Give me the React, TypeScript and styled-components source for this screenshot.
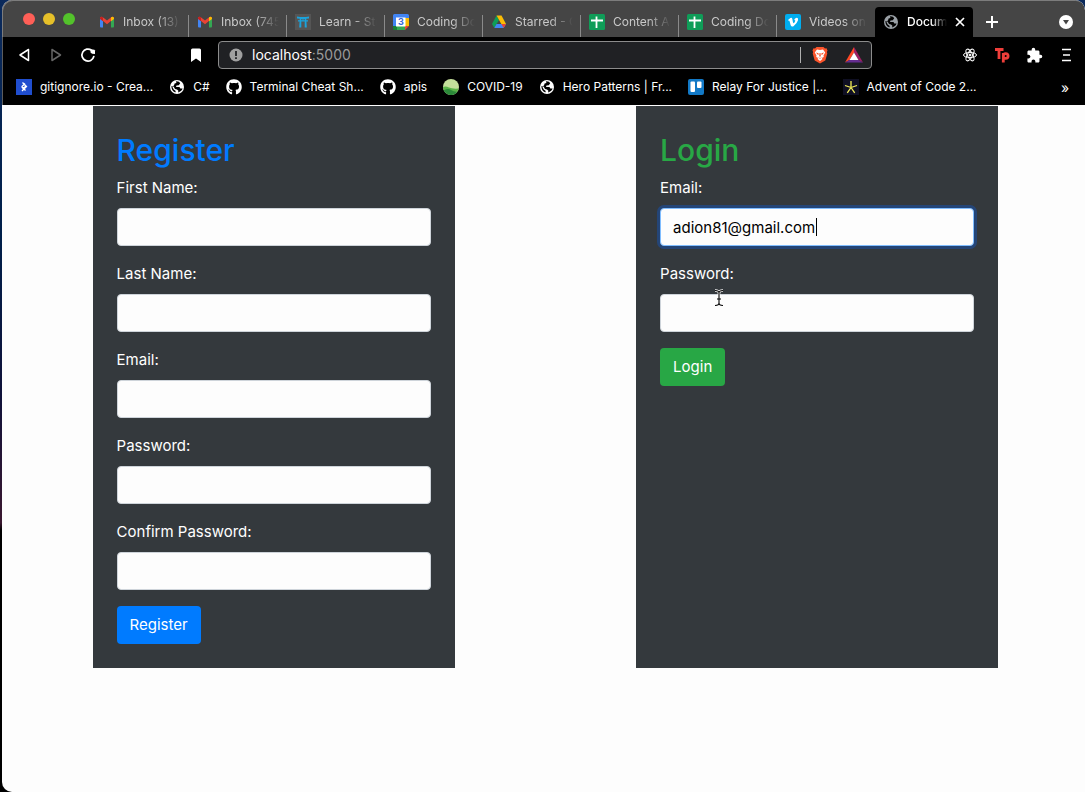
import React, { useId } from "react";
import styled, { createGlobalStyle, css } from "styled-components";
import { FaGithub } from "react-icons/fa";
import { MdExtension } from "react-icons/md";

const GlobalStyle = createGlobalStyle`
  *, *::before, *::after { box-sizing: border-box; }
  html, body, #root { height: 100%; }
  body {
    margin: 0;
    overflow: hidden;
    background: #000;
    font-family: Inter, "Liberation Sans", sans-serif;
    -webkit-font-smoothing: antialiased;
  }
  button, input { font: inherit; }
`;

const Desktop = styled.div`
  min-height: 100vh;
  display: flex;
  padding-left: 2px;
  background: linear-gradient(#0b2a5c 0, #001f4a 30%, #10123a 50%, #3a1830 66%, #000 67%);
`;

const BrowserWindow = styled.div`
  flex: 1;
  min-width: 0;
  display: flex;
  flex-direction: column;
  overflow: hidden;
  border-radius: 10px 10px 0 10px;
  background: #fdfdfd;
`;

const TabStrip = styled.div`
  display: flex;
  align-items: flex-end;
  height: 37px;
  border-radius: 10px 10px 0 0;
  background: #454545;
  box-shadow: inset 1px 1px #7c7c7c;
`;

const TrafficLights = styled.div`
  display: flex;
  gap: 8px;
  align-self: center;
  padding: 0 16px 0 21px;
`;

const Light = styled.button<{ $color: string }>`
  width: 12px;
  height: 12px;
  padding: 0;
  border: 0;
  border-radius: 50%;
  background: ${(p) => p.$color};
`;

const Tabs = styled.div`
  display: flex;
  align-items: flex-end;
`;

const Tab = styled.button<{ $active?: boolean; $divider?: boolean }>`
  display: flex;
  align-items: center;
  gap: 8px;
  width: 98px;
  height: 30px;
  padding: 0 8px;
  border: 0;
  background: none;
  color: #c9c9c9;
  font-size: 12px;
  line-height: 16px;
  text-align: left;
  ${(p) =>
    p.$divider &&
    css`
      background: linear-gradient(#8a8a8a, #8a8a8a) right bottom / 1px 22px no-repeat;
    `}
  ${(p) =>
    p.$active &&
    css`
      border-radius: 4px 4px 0 0;
      background: #000;
      color: #fff;
      font-weight: 500;
    `}
  svg { flex: none; }
`;

const TabTitle = styled.span`
  flex: 1;
  min-width: 0;
  white-space: nowrap;
  mask-image: linear-gradient(to right, #000 60%, transparent);
`;

const IconButton = styled.button`
  display: inline-flex;
  align-items: center;
  justify-content: center;
  width: 20px;
  height: 20px;
  padding: 0;
  border: 0;
  background: none;
  color: #fff;
`;

const TabStripEnd = styled.div`
  flex: 1;
  display: flex;
  align-items: center;
  justify-content: space-between;
  height: 30px;
  padding: 0 9px;
`;

const Toolbar = styled.div`
  display: flex;
  align-items: center;
  height: 36px;
  padding: 0 9px 0 12px;
  background: #000;
  box-shadow: inset 1px 0 #5c5c5c;
`;

const NavButtons = styled.div`
  display: flex;
  flex: 1;
  gap: 12px;
`;

const AddressBar = styled.div`
  display: flex;
  align-items: center;
  flex: 0 1 654px;
  height: 28px;
  margin-left: 12px;
  padding: 0 7px 0 10px;
  border: 1px solid #8c8c8c;
  border-radius: 4px;
  background: #202124;
  color: #9a9a9a;
  font-size: 14px;
  line-height: 20px;
`;

const Address = styled.div`
  flex: 1;
  padding-left: 9px;
  b { color: #fff; font-weight: 400; }
`;

const Shields = styled.div`
  display: flex;
  align-items: center;
  gap: 14px;
  height: 16px;
  padding-left: 9px;
  border-left: 1px solid #b0b0b0;
`;

const Extensions = styled.div`
  display: flex;
  flex: 1;
  justify-content: flex-end;
  gap: 12px;
  padding-left: 32px;
`;

const BookmarksBar = styled.nav`
  display: flex;
  align-items: center;
  gap: 16px;
  height: 32px;
  padding: 0 10px 4px 14px;
  background: #000;
  box-shadow: inset 1px 0 #5c5c5c;
`;

const Bookmark = styled.a`
  display: flex;
  align-items: center;
  gap: 8px;
  color: #fff;
  font-size: 12px;
  line-height: 16px;
  text-decoration: none;
  white-space: nowrap;
  svg { flex: none; }
`;

const Overflow = styled(IconButton)`
  margin-left: auto;
  font-size: 14px;
`;

const Main = styled.main`
  display: flex;
  justify-content: space-around;
  align-items: stretch;
  margin-right: -4px;
  padding-top: 1px;
`;

const Panel = styled.form`
  width: 33.3333%;
  padding: 24px;
  background: #34393d;
  color: #fff;
  font-size: 15px;
  line-height: 24px;
`;

const Title = styled.h2<{ $color: string }>`
  margin: 0 0 6px;
  color: ${(p) => p.$color};
  font-size: 30px;
  line-height: 40px;
  font-weight: 500;
`;

const Field = styled.div`
  margin-bottom: 16px;
`;

const Label = styled.label`
  display: block;
  margin-bottom: 8px;
`;

const InputWrap = styled.div`
  position: relative;
`;

const Input = styled.input`
  display: block;
  width: 100%;
  height: 38px;
  padding: 6px 12px;
  border: 1px solid #ced4da;
  border-radius: 4px;
  background: #fdfdfd;
  color: #000;
  outline: 0;
  caret-color: transparent;
  &:focus {
    border-color: #80bdff;
    box-shadow: 0 0 0 3px rgba(0, 98, 255, 0.3);
  }
`;

const Caret = styled.span`
  position: absolute;
  left: 156px;
  top: 10px;
  width: 1px;
  height: 18px;
  background: #000;
`;

const Submit = styled.button<{ $color: string }>`
  display: block;
  height: 38px;
  padding: 0 13px;
  border: 0;
  border-radius: 4px;
  background: ${(p) => p.$color};
  color: #fff;
`;

const TextPointer = styled.svg`
  position: absolute;
  left: 54px;
  top: -5px;
  pointer-events: none;
`;

const Gmail = () => (
  <svg width="16" height="16" viewBox="0 0 16 16">
    <path fill="#4285f4" d="M1 4v8.500q0 1 1 1h2V6.500z" />
    <path fill="#34a853" d="M15 4v8.500q0 1-1 1h-2V6.500z" />
    <path fill="#ea4335" d="M1 4.500q0-2.500 2.500-1.500L8 6.500 12.500 3Q15 2 15 4.500L8 10.200z" />
    <path fill="#fbbc04" d="M12 3.400l.5-.4Q15 2 15 4.500V5l-3 2.300z" />
    <path fill="#c5221f" d="M4 3.400L3.500 3Q1 2 1 4.500V5l3 2.300z" />
  </svg>
);

const Torii = () => (
  <svg width="16" height="16" viewBox="0 0 16 16">
    <rect width="16" height="16" fill="#555" />
    <path fill="#1aa3dc" d="M2 2.500q6 1.200 12 0v2q-6 .8-12 0zM3 6.200h10v1.400H3zM4.800 4h1.500v9.500H4.200zM9.700 4h1.500l.6 9.500H9.700zM7.500 4h1v3h-1z" />
  </svg>
);

const Calendar = () => (
  <svg width="16" height="16" viewBox="0 0 16 16">
    <path fill="#4285f4" d="M1.500 0h13A1.500 1.500 0 0 1 16 1.500V4H4v12L0 12V1.500A1.500 1.500 0 0 1 1.500 0z" />
    <path fill="#188038" d="M0 12h4v4H1.500A1.500 1.500 0 0 1 0 14.500z" />
    <path fill="#34a853" d="M4 12h8v4H4z" />
    <path fill="#fbbc04" d="M12 4h4v8h-4z" />
    <path fill="#ea4335" d="M12 12h4l-4 4z" />
    <rect x="3" y="3.500" width="9.500" height="9" fill="#fff" />
    <text x="7.800" y="11.300" fontSize="9" fontWeight="700" fontFamily="Inter, sans-serif" textAnchor="middle" fill="#3367d6">3</text>
  </svg>
);

const Drive = () => (
  <svg width="16" height="16" viewBox="0 0 16 16">
    <path fill="#0f9d58" d="M5.500 1.500L8 6 3.300 14 1 10z" />
    <path fill="#fbbc04" d="M5.500 1.500h5L15 10h-4.700z" />
    <path fill="#4285f4" d="M5.500 10H15l-2.300 4H3.300z" />
    <path fill="#ea4335" d="M10.300 10H15l-2.300 4z" />
  </svg>
);

const Sheets = () => (
  <svg width="16" height="16" viewBox="0 0 16 16">
    <rect width="16" height="16" rx="1.500" fill="#0f9d58" />
    <path stroke="#fff" strokeWidth="1.800" d="M2 6.500h12M7.500 2.500v11.500" />
  </svg>
);

const Vimeo = () => (
  <svg width="16" height="16" viewBox="0 0 16 16">
    <rect width="16" height="16" rx="2" fill="#00adef" />
    <path fill="#fff" d="M3 6l2.400-2q1.600-.8 2 1.200.6 4 1.200 4 .7 0 1.600-2.300.2-1.200-1.200-.7Q9.800 3.500 12 3.700q1.500.3 1 2.500Q12 9.500 8.500 12.200q-2 1.200-2.800-1L4.500 7q-.3-.8-1-.2z" />
  </svg>
);

const Globe = ({ color = "#fff", hole = "#000" }) => (
  <svg width="16" height="16" viewBox="0 0 16 16">
    <circle cx="8" cy="8" r="7" fill={color} />
    <path fill={hole} d="M7 2.200Q10.500 2 11.200 4.300L9.800 6.200 7.500 6.400 7 8h3.500l.8 1.600h2.300Q12.500 12.800 9 13.400l.4-1.700L8 10.500 6 10 4.600 7.600 2.400 7q-.2 4.800 4 6.500l.3-1.600-2-1.300L3.200 7.400 5 6.500 5.600 4.500 7.400 4z" />
  </svg>
);

const Toptal = () => (
  <svg width="16" height="16" viewBox="0 0 16 16">
    <rect width="16" height="16" fill="#204ecf" />
    <path fill="none" stroke="#fff" strokeWidth="1.300" d="M6.500 3.500l4 4-4.500 4.500M5.500 7.500l4 4M6 7.500l3-3M10 7l-3.500 3" />
  </svg>
);

const CovidMap = () => (
  <svg width="16" height="16" viewBox="0 0 16 16">
    <circle cx="8" cy="8" r="8" fill="#c5e09b" />
    <path fill="#5cb549" d="M0 8q3-1 6 .5T15.700 9.500A8 8 0 0 1 0 8z" />
    <path fill="#2c8a3a" d="M.8 11.500Q5 9 8 11t6.500 1.700A8 8 0 0 1 .8 11.500z" />
  </svg>
);

const Trello = () => (
  <svg width="16" height="16" viewBox="0 0 16 16">
    <rect width="16" height="16" rx="2" fill="#1279c6" />
    <rect x="2.500" y="2.500" width="4.500" height="10.500" rx="1" fill="#fff" />
    <rect x="9" y="2.500" width="4.500" height="6.500" rx="1" fill="#fff" />
  </svg>
);

const Star = () => (
  <svg width="16" height="16" viewBox="0 0 16 16">
    <rect width="16" height="16" fill="#0f0f23" />
    <path fill="none" stroke="#f5ef5a" strokeWidth="1.300" d="M8 8.500V2M8 8.500L2 6.500M8 8.500l6-2M8 8.500L4.300 13.800M8 8.500l3.700 5.300" />
  </svg>
);

const Brave = () => (
  <svg width="18" height="18" viewBox="0 0 18 18">
    <path fill="#fb542b" d="M5.500 1h7l1.500 1.500 1.500-.2 1 2.200-.6 1.500.4 1.500-2 7L9 17.500 3.700 14.500l-2-7L2.100 6l-.6-1.500 1-2.200 1.500.2z" />
    <path fill="#fff" d="M6 3.500l3 .5 3-.5 2.200 3-1.700 3 .3 1.500-2 1 .7 1L9 15l-2.500-2 .7-1-2-1 .3-1.500-1.700-3z" />
    <path fill="#fb542b" d="M5 6.500l2.500.7.3 1.500L6.500 8.500zM13 6.500l-2.500.7-.3 1.500 1.300-.2zM8.500 7h1l.3 3L9 11l-.8-1zM6.700 11.200L9 12l2.300-.8L9 12.800z" />
  </svg>
);

const Bat = () => (
  <svg width="18" height="16" viewBox="0 0 18 16">
    <path fill="#ff4724" d="M9 0v5.500L4.500 13 0 15.500z" />
    <path fill="#9e1f63" d="M9 0v5.500l4.500 7.500 4.500 2.500z" />
    <path fill="#662d91" d="M0 15.500L4.500 13h9l4.500 2.500z" />
    <path fill="#fff" d="M9 5.500l4.500 7.500h-9z" />
  </svg>
);

const Atom = () => (
  <svg width="16" height="16" viewBox="0 0 16 16" fill="none" stroke="#fff" strokeWidth="1">
    <ellipse cx="8" cy="8" rx="6.500" ry="2.600" />
    <ellipse cx="8" cy="8" rx="6.500" ry="2.600" transform="rotate(60 8 8)" />
    <ellipse cx="8" cy="8" rx="6.500" ry="2.600" transform="rotate(120 8 8)" />
    <circle cx="8" cy="8" r="1" fill="#fff" />
  </svg>
);

const Back = ({ flip = false, color = "#fff" }) => (
  <svg width="20" height="20" viewBox="0 0 20 20">
    <path fill="none" stroke={color} strokeWidth="1.500" strokeLinejoin="round" d={flip ? "M6 4.500v11l8.500-5.500z" : "M14.500 4.500v11L6 10z"} />
  </svg>
);

const Reload = () => (
  <svg width="20" height="20" viewBox="0 0 20 20">
    <path fill="none" stroke="#fff" strokeWidth="1.700" strokeLinecap="round" d="M15.800 11.500a6 6 0 1 1-2.300-6.300" />
    <path fill="#fff" d="M12.500 4.500q4.500-.5 4.500 1v3.500q-3.500 0-4.500-1.500z" />
  </svg>
);

const BookmarkFlag = () => (
  <svg width="12" height="14" viewBox="0 0 12 14">
    <path fill="#fff" d="M2.500.5h7q1.500 0 1.500 1.500v12l-5-3.500L1 14V2Q1 .5 2.500.5z" />
  </svg>
);

const Info = () => (
  <svg width="14" height="14" viewBox="0 0 14 14">
    <circle cx="7" cy="7" r="6.500" fill="#a0a0a0" />
    <path stroke="#202124" strokeWidth="1.800" d="M7 3v5M7 9.200v1.900" />
  </svg>
);

const tabs = [
  { title: "Inbox (13) ·", icon: <Gmail /> },
  { title: "Inbox (745", icon: <Gmail /> },
  { title: "Learn - Stu", icon: <Torii /> },
  { title: "Coding Do", icon: <Calendar /> },
  { title: "Starred - G", icon: <Drive /> },
  { title: "Content Au", icon: <Sheets /> },
  { title: "Coding Do", icon: <Sheets /> },
  { title: "Videos on", icon: <Vimeo /> },
];

const bookmarks = [
  { title: "gitignore.io - Crea...", icon: <Toptal /> },
  { title: "C#", icon: <Globe /> },
  { title: "Terminal Cheat Sh...", icon: <FaGithub size={16} /> },
  { title: "apis", icon: <FaGithub size={16} /> },
  { title: "COVID-19", icon: <CovidMap /> },
  { title: "Hero Patterns | Fr...", icon: <Globe /> },
  { title: "Relay For Justice |...", icon: <Trello /> },
  { title: "Advent of Code 2...", icon: <Star /> },
];

type FormFieldProps = {
  label: string;
  type?: string;
  value?: string;
  focused?: boolean;
  children?: React.ReactNode;
};

function FormField({ label, type = "text", value, focused, children }: FormFieldProps) {
  const id = useId();
  return (
    <Field>
      <Label htmlFor={id}>{label}</Label>
      <InputWrap>
        <Input id={id} type={type} defaultValue={value} autoFocus={focused} />
        {children}
      </InputWrap>
    </Field>
  );
}

export default function App() {
  return (
    <Desktop>
      <GlobalStyle />
      <BrowserWindow>
        <TabStrip>
          <TrafficLights>
            <Light $color="#ff5f57" aria-label="Close window" />
            <Light $color="#e6c029" aria-label="Minimize window" />
            <Light $color="#53c22b" aria-label="Zoom window" />
          </TrafficLights>
          <Tabs>
            {tabs.map((tab, i) => (
              <Tab key={i} $divider={i < tabs.length - 1}>
                {tab.icon}
                <TabTitle>{tab.title}</TabTitle>
              </Tab>
            ))}
            <Tab $active>
              <Globe color="#9aa0a6" />
              <TabTitle>Docum</TabTitle>
              <svg width="10" height="10" viewBox="0 0 10 10">
                <path stroke="#fff" strokeWidth="1.700" d="M1 1l8 8M9 1L1 9" />
              </svg>
            </Tab>
          </Tabs>
          <TabStripEnd>
            <IconButton aria-label="New tab">
              <svg width="12" height="12" viewBox="0 0 12 12">
                <path stroke="#fff" strokeWidth="2" d="M6 0v12M0 6h12" />
              </svg>
            </IconButton>
            <IconButton aria-label="Search tabs">
              <svg width="14" height="14" viewBox="0 0 14 14">
                <circle cx="7" cy="7" r="7" fill="#fff" />
                <path fill="#454545" d="M4 5h6L7 9.500z" />
              </svg>
            </IconButton>
          </TabStripEnd>
        </TabStrip>
        <Toolbar>
          <NavButtons>
            <IconButton aria-label="Back"><Back /></IconButton>
            <IconButton aria-label="Forward"><Back flip color="#666" /></IconButton>
            <IconButton aria-label="Reload"><Reload /></IconButton>
          </NavButtons>
          <IconButton aria-label="Bookmark this page"><BookmarkFlag /></IconButton>
          <AddressBar>
            <Info />
            <Address><b>localhost</b>:5000</Address>
            <Shields>
              <IconButton aria-label="Shields"><Brave /></IconButton>
              <IconButton aria-label="Rewards"><Bat /></IconButton>
            </Shields>
          </AddressBar>
          <Extensions>
            <IconButton aria-label="React tools"><Atom /></IconButton>
            <IconButton aria-label="Teleparty">
              <svg width="16" height="16" viewBox="0 0 16 16">
                <path fill="none" stroke="#ef3e3a" strokeWidth="2.800" d="M1 2.500h8.500M5 2.500v9.500M9.300 15.500V6M9.300 9q0-2.300 2.400-2.300T14.100 9t-2.400 2.400T9.300 9" />
              </svg>
            </IconButton>
            <IconButton aria-label="Extensions"><MdExtension size={17} /></IconButton>
            <IconButton aria-label="Menu">
              <svg width="10" height="14" viewBox="0 0 10 14">
                <path stroke="#fff" strokeWidth="1.500" d="M1 1.500h9M2 7h7M1 12.500h9" />
              </svg>
            </IconButton>
          </Extensions>
        </Toolbar>
        <BookmarksBar>
          {bookmarks.map((b) => (
            <Bookmark key={b.title} href="#">
              {b.icon}
              {b.title}
            </Bookmark>
          ))}
          <Overflow aria-label="More bookmarks">»</Overflow>
        </BookmarksBar>
        <Main>
          <Panel>
            <Title $color="#007bff">Register</Title>
            <FormField label="First Name:" />
            <FormField label="Last Name:" />
            <FormField label="Email:" />
            <FormField label="Password:" type="password" />
            <FormField label="Confirm Password:" type="password" />
            <Submit type="button" $color="#007bff">Register</Submit>
          </Panel>
          <Panel>
            <Title $color="#28a745">Login</Title>
            <FormField label="Email:" value="adion81@gmail.com" focused>
              <Caret />
            </FormField>
            <FormField label="Password:" type="password">
              <TextPointer width="10" height="18" viewBox="0 0 10 18">
                <path fill="none" stroke="#fff" strokeWidth="2.600" d="M1 1.500q4 0 4 2.500v10q0 2.500-4 2.500M9 1.500q-4 0-4 2.500v10q0 2.500 4 2.500" />
                <path fill="none" stroke="#000" strokeWidth="1.100" d="M1 1.500q4 0 4 2.500v10q0 2.500-4 2.500M9 1.500q-4 0-4 2.500v10q0 2.500 4 2.500M3 10h4" />
              </TextPointer>
            </FormField>
            <Submit type="button" $color="#28a745">Login</Submit>
          </Panel>
        </Main>
      </BrowserWindow>
    </Desktop>
  );
}
